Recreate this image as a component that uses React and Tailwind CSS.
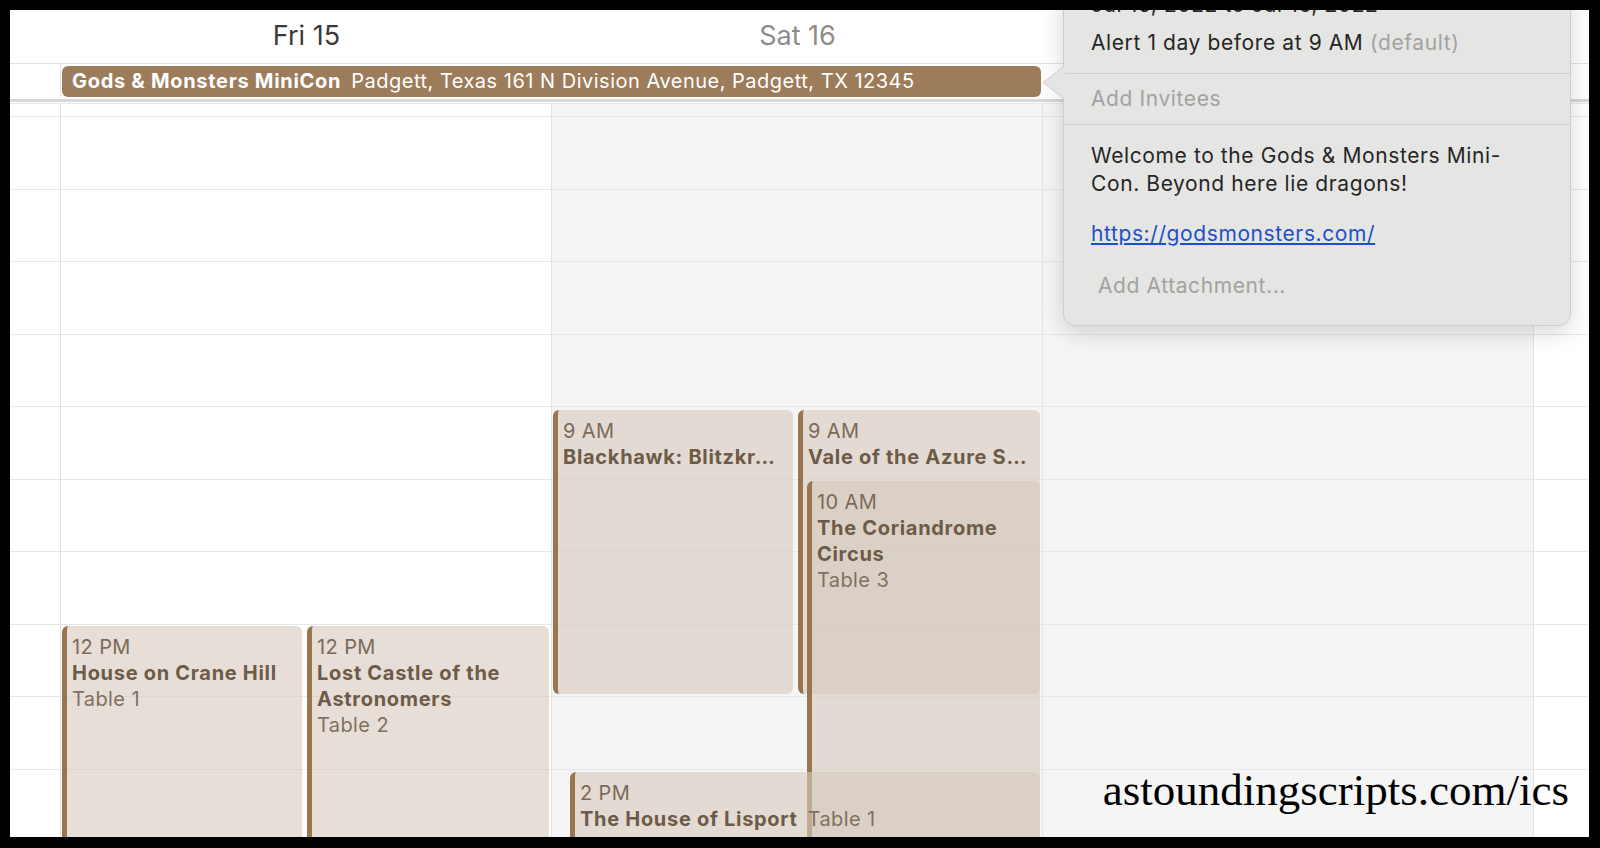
import React from 'react'

const hours = [5, 6, 7, 8, 9, 10, 11, 12, 13, 14]

function HourLines() {
  return (
    <div className="flex flex-col">
      <div className="h-[13px] border-b border-[#e6e6e6]" />
      {hours.map((h) => (
        <div key={h} className="h-[72.5px] shrink-0 border-b border-[#e6e6e6]" />
      ))}
    </div>
  )
}

function Event({ className, time, title, location, inline, nowrap }) {
  return (
    <div
      className={`absolute overflow-hidden rounded-[6px] border-l-[5px] border-[#98764f] bg-[rgba(215,202,191,0.62)] pl-[5px] pr-[6px] pt-[8px] text-[20px] leading-[26px] tracking-[0.4px] ${className}`}
    >
      <div className="text-[#7b6a58]">{time}</div>
      {inline ? (
        <div className="whitespace-nowrap">
          <span className="font-bold tracking-[0.7px] text-[#6d5b48]">{title}</span>
          <span className="ml-[10px] text-[#807060]">{location}</span>
        </div>
      ) : (
        <>
          <div className={`font-bold tracking-[0.7px] text-[#6d5b48] ${nowrap ? 'whitespace-nowrap' : ''}`}>{title}</div>
          {location && <div className="text-[#807060]">{location}</div>}
        </>
      )}
    </div>
  )
}

export default function App() {
  return (
    <div className="h-[848px] w-[1600px] bg-black pl-[10px] pt-[10px]">
      <div className="relative h-[827px] w-[1579px] overflow-hidden bg-white font-['Inter',sans-serif]">
        {/* day header */}
        <div className="flex h-[54px] border-b border-[#e2e2e2]">
          <div className="w-[51px]" />
          <div className="flex w-[491px] items-center justify-center text-[27px] text-[#3a3a3a]">Fri 15</div>
          <div className="flex w-[491px] items-center justify-center text-[27px] text-[#8c8c8c]">Sat 16</div>
          <div className="w-[491px]" />
        </div>

        {/* all-day row */}
        <div className="flex h-[35px]">
          <div className="w-[51px] border-r border-[#e3e3e3]" />
          <div className="pl-[1px] pt-[2px]">
            <div className="flex h-[31px] w-[979px] items-center whitespace-nowrap rounded-[6px] bg-[#9c7c5b] pb-[2px] pl-[10px] text-[20px] text-white">
              <span className="font-bold tracking-[0.7px]">Gods &amp; Monsters MiniCon</span>
              <span className="ml-[10px] tracking-[0.5px]">Padgett, Texas 161 N Division Avenue, Padgett, TX 12345</span>
            </div>
          </div>
        </div>
        <div className="h-[3px] bg-[#d8d8d8]" />
        <div className="h-[2px] border-b border-[#e6e6e6]" />

        {/* timed grid */}
        <div className="flex h-[733px]">
          <div className="relative w-[51px] border-r border-[#e3e3e3] bg-white">
            <HourLines />
          </div>

          <div className="relative w-[491px] border-r border-[#e3e3e3] bg-white">
            <HourLines />
            <Event className="left-[1px] top-[522px] h-[300px] w-[240px]" time="12 PM" title="House on Crane Hill" location="Table 1" />
            <Event className="left-[246px] top-[522px] h-[300px] w-[242px]" time="12 PM" title="Lost Castle of the Astronomers" location="Table 2" />
          </div>

          <div className="relative w-[491px] border-r border-[#e3e3e3] bg-[#f5f5f5]">
            <HourLines />
            <Event className="left-[1px] top-[306px] h-[284px] w-[240px]" time="9 AM" title="Blackhawk: Blitzkr…" nowrap />
            <Event className="left-[246px] top-[306px] h-[284px] w-[242px]" time="9 AM" title="Vale of the Azure S…" nowrap />
            <Event className="left-[255px] top-[377px] h-[420px] w-[233px]" time="10 AM" title="The Coriandrome Circus" location="Table 3" />
            <Event className="left-[18px] top-[668px] h-[200px] w-[470px]" time="2 PM" title="The House of Lisport" location="Table 1" inline />
          </div>

          <div className="relative w-[491px] border-r border-[#e3e3e3] bg-[#f5f5f5]">
            <HourLines />
          </div>

          <div className="relative flex-1 bg-white">
            <HourLines />
          </div>
        </div>

        {/* event popover */}
        <div className="absolute left-[1053px] top-[-60px] h-[376px] w-[508px] rounded-[12px] border border-[#cdcdcd] bg-[#e5e5e3] text-[21px] leading-[28px] tracking-[0.6px] text-[#262626] shadow-[0_6px_24px_rgba(0,0,0,0.16)]">
          <div className="border-b border-[#cfcfcd] pb-[16px] pl-[27px] pt-[40px]">
            <div>Jul 15, 2022 to Jul 16, 2022</div>
            <div className="mt-[10px]">
              Alert 1 day before at 9 AM <span className="text-[#a2a2a2]">(default)</span>
            </div>
          </div>
          <div className="flex h-[51px] items-center border-b border-[#cfcfcd] pl-[27px] text-[#a2a2a2]">Add Invitees</div>
          <div className="pl-[27px] pt-[17px]">
            <div>Welcome to the Gods &amp; Monsters Mini-</div>
            <div>Con. Beyond here lie dragons!</div>
            <div className="mt-[22px] text-[#1d50cc] underline">https://godsmonsters.com/</div>
            <div className="mt-[24px] pl-[7px] text-[#a2a2a2]">Add Attachment...</div>
          </div>
        </div>
        <svg className="absolute left-[1032px] top-[56px]" width="23" height="33" viewBox="0 0 23 33">
          <path d="M23 0 L1 16.5 L23 33 Z" fill="#e5e5e3" />
          <path d="M22 0.5 L1 16.5 L22 32.5" fill="none" stroke="#cdcdcd" strokeWidth="1" />
        </svg>

        {/* watermark */}
        <div className="absolute right-[20px] top-[758px] font-['Liberation_Serif',serif] text-[45px] leading-none text-black">
          astoundingscripts.com/ics
        </div>
      </div>
    </div>
  )
}
